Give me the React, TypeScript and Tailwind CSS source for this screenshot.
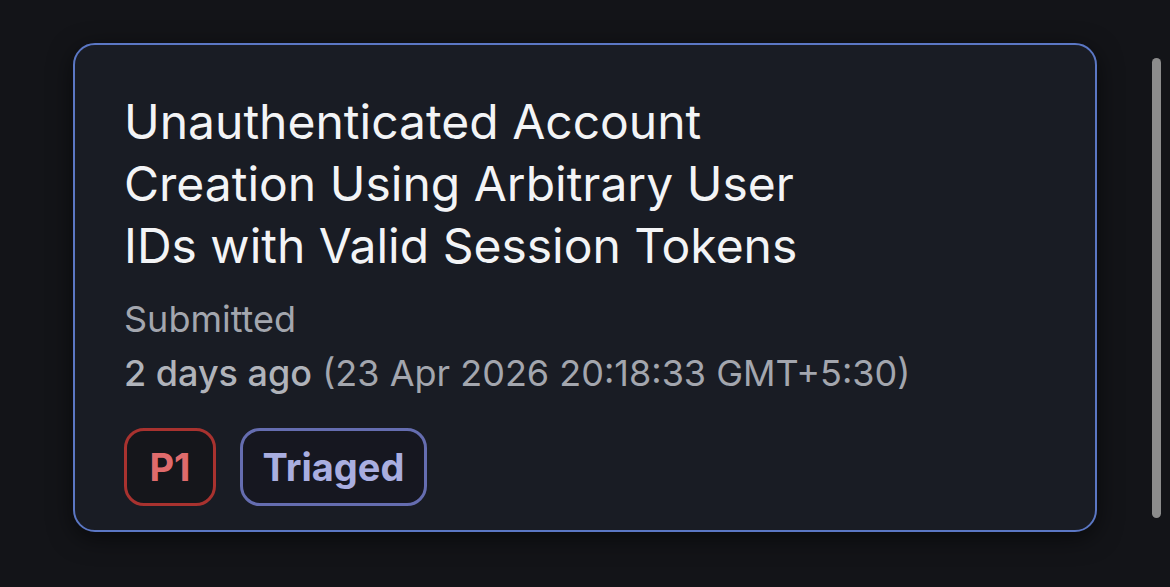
import React from "react";

export default function App() {
  return (
    <div
      className="w-[1170px] h-[587px] bg-[#131418] flex overflow-hidden"
      style={{ fontFamily: "Inter, 'Noto Sans', sans-serif" }}
    >
      <div className="shrink-0 pl-[73px] pt-[43px]">
        <div className="w-[1024px] h-[489px] rounded-[22px] border-[2.5px] border-[#5b77c4] bg-[#191c24] shadow-[0_6px_24px_rgba(0,0,0,0.55)] pl-[49px] pt-[46px]">
          <h1 className="text-[48px] leading-[62px] text-[#f3f4f6] font-normal">
            Unauthenticated Account
            <br />
            Creation Using Arbitrary User
            <br />
            IDs with Valid Session Tokens
          </h1>
          <div className="mt-[22px] text-[36px] leading-[40px] text-[#a3a6ae]">Submitted</div>
          <div className="mt-[14px] text-[36px] leading-[40px] text-[#a3a6ae]">
            <span className="font-medium text-[#b0b3ba]">2 days ago</span> (23 Apr 2026 20:18:33 GMT+5:30)
          </div>
          <div className="mt-[35px] flex gap-[24px]">
            <span className="h-[78px] w-[92px] flex items-center justify-center rounded-[20px] border-[3px] border-[#a8322f] bg-[#15161b] text-[#df6b6c] text-[38px] font-bold">
              P1
            </span>
            <span className="h-[78px] w-[187px] flex items-center justify-center rounded-[20px] border-[3px] border-[#656db0] bg-[#161720] text-[#a9aee0] text-[38px] font-bold">
              Triaged
            </span>
          </div>
        </div>
      </div>
      <div className="shrink-0 pt-[58px] pl-[55px]">
        <div className="w-[9px] h-[460px] rounded-full bg-[#8c8c8c]" />
      </div>
    </div>
  );
}
